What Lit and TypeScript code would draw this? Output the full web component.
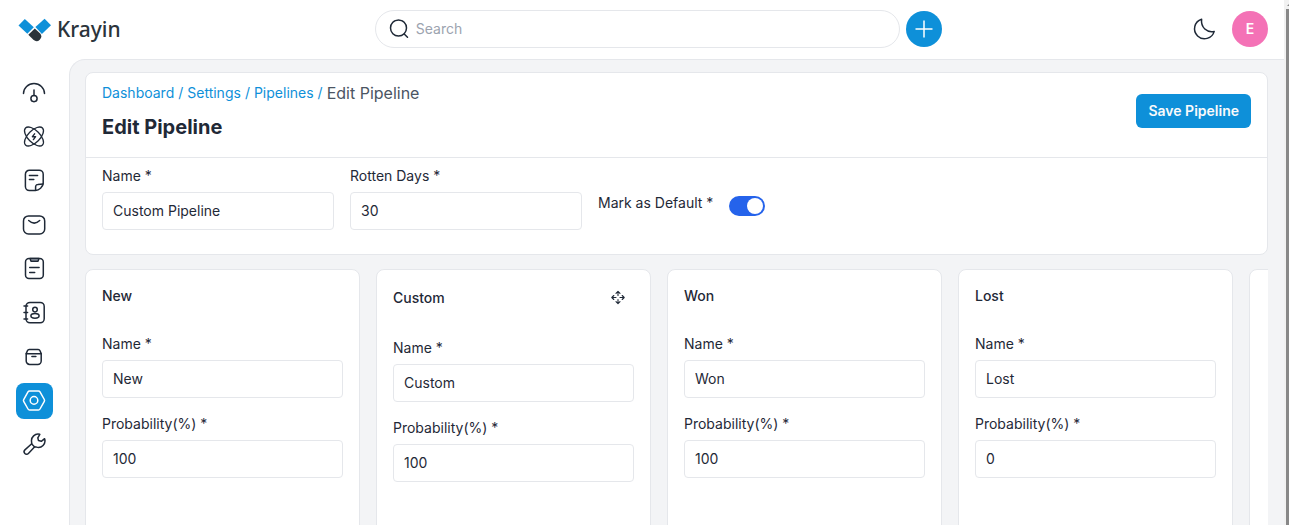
import { LitElement, html, css, svg } from "lit";
import { customElement, property, state } from "lit/decorators.js";
import { classMap } from "lit/directives/class-map.js";

interface Stage {
  title: string;
  name: string;
  probability: string;
  movable?: boolean;
}

interface NavEntry {
  label: string;
  icon: unknown;
}

const NAV: NavEntry[] = [
  {
    label: "Dashboard",
    icon: svg`<path d="M1.5 12.6a10.5 10 0 0 1 21 0"/><circle cx="12" cy="17.6" r="3.1"/><path d="M12 9v5.4"/>`,
  },
  {
    label: "Leads",
    icon: svg`<g stroke-width="1.3"><ellipse cx="12" cy="11.5" rx="12" ry="6" transform="rotate(45 12 11.5)"/><ellipse cx="12" cy="11.5" rx="12" ry="6" transform="rotate(-45 12 11.5)"/></g><path d="M12.600 8.800l-2.200 2.900h3.200l-2.200 2.900" stroke-width="1.400"/>`,
  },
  {
    label: "Quotes",
    icon: svg`<path d="M13.4 21.6H7.4a4 4 0 0 1-4-4V5.2a4 4 0 0 1 4-4h9.8a4 4 0 0 1 4 4v9.2c-.2 3.600-4.200 6.800-7.800 7.200z"/><path d="M13.600 21.300v-3.500a2.200 2.200 0 0 1 2.200-2.200l5.200-.6"/><path d="M7.400 6.600h8.200M7.400 10.400h4.400"/>`,
  },
  {
    label: "Mail",
    icon: svg`<rect x="1.500" y="2.900" width="21.200" height="18" rx="5"/><path d="M6.700 7.500c3.600 3.400 7.400 3.400 11 0"/>`,
  },
  {
    label: "Activities",
    icon: svg`<rect x="3.500" y="1.400" width="17.800" height="20.200" rx="3.500"/><path d="M8 1.600l1 2.600h7l1-2.600z" fill="#9ca3af"/><path d="M7.700 10.400h9.400M7.700 15.400h5"/>`,
  },
  {
    label: "Contacts",
    icon: svg`<rect x="4" y="1.400" width="18.200" height="20.400" rx="4"/><path d="M2 5h3.600M2 11.500h3.600M2 18h3.600"/><circle cx="13" cy="8.600" r="2.300"/><ellipse cx="13" cy="14.800" rx="4.100" ry="2.400"/>`,
  },
  {
    label: "Products",
    icon: svg`<path d="M4.200 8.600l1.200-2.900a2 2 0 0 1 1.800-1.200h9a2 2 0 0 1 1.800 1.200l1.200 2.900v7.400a3.400 3.400 0 0 1-3.400 3.400H7.600a3.400 3.400 0 0 1-3.400-3.400z"/><path d="M4.200 8.700h15M9.900 11.600h4"/>`,
  },
  {
    label: "Settings",
    icon: svg`<path d="M7.600 2h8.800a1.800 1.800 0 0 1 1.600.9l4.300 7.600a1.800 1.800 0 0 1 0 1.800L18 20a1.800 1.800 0 0 1-1.600.9H7.600A1.800 1.800 0 0 1 6 20l-4.300-7.700a1.800 1.800 0 0 1 0-1.800L6 2.900A1.800 1.800 0 0 1 7.600 2z"/><circle cx="12" cy="11.400" r="3.800"/>`,
  },
  {
    label: "Configuration",
    icon: svg`<path d="M17.800 1.300a6.600 6.600 0 0 0-8.200 7.600L9.700 11l3 3 1.700.1a6.600 6.600 0 0 0 8.200-8.400l-3.300 2.600-2.800-.7-.7-2.800z"/><path d="M9.700 10.800l-6.800 6.100a2.500 2.500 0 1 0 3.500 3.600l6.300-6.700"/>`,
  },
];

/* Text box with its caption above it. */
@customElement("form-field")
class FormField extends LitElement {
  @property() label = "";
  @property() value = "";

  static styles = css`
    :host {
      display: block;
    }
    .caption {
      display: block;
      margin-bottom: 6px;
      font-size: 14px;
      line-height: 20px;
      color: #1f2937;
    }
    .box {
      display: block;
      box-sizing: border-box;
      width: 100%;
      height: 38px;
      padding: 0 10px 2px;
      border: 1px solid #e5e7eb;
      border-radius: 4px;
      background: #fff;
      font: inherit;
      font-size: 14px;
      color: #1f2937;
      outline: none;
    }
    .box:focus {
      border-color: #9ca3af;
    }
  `;

  render() {
    return html`
      <label class="caption" for="box">${this.label} *</label>
      <input class="box" id="box" type="text" .value=${this.value} />
    `;
  }
}

@customElement("app-root")
class AppRoot extends LitElement {
  @state() private active = "Settings";

  private stages: Stage[] = [
    { title: "New", name: "New", probability: "100" },
    { title: "Custom", name: "Custom", probability: "100", movable: true },
    { title: "Won", name: "Won", probability: "100" },
    { title: "Lost", name: "Lost", probability: "0" },
  ];

  static styles = css`
    :host {
      display: flex;
      height: 100vh;
      overflow: hidden;
      background: #fff;
      font-family: Inter, "Liberation Sans", sans-serif;
      font-size: 14px;
      line-height: 20px;
      color: #1f2937;
    }
    * {
      box-sizing: border-box;
    }
    svg {
      display: block;
      flex: none;
    }
    button {
      font: inherit;
      cursor: pointer;
    }
    .line {
      fill: none;
      stroke: currentColor;
      stroke-width: 1.5;
      stroke-linecap: round;
      stroke-linejoin: round;
    }
    .page {
      flex: 1;
      min-width: 0;
      display: flex;
      flex-direction: column;
    }
    .top {
      flex: none;
      display: flex;
      align-items: center;
      justify-content: space-between;
      height: 59px;
      padding: 0 16px 1px;
    }
    .brand {
      display: flex;
      align-items: center;
      gap: 5px;
      padding-right: 4px;
      color: #2b343b;
      font-family: "Noto Sans", sans-serif;
      font-size: 21px;
      font-weight: 500;
      line-height: 28px;
      text-decoration: none;
    }
    .middle {
      flex: 0 1 567px;
      display: flex;
      align-items: center;
      gap: 6px;
    }
    .search {
      flex: 1;
      min-width: 0;
      display: flex;
      align-items: center;
      gap: 5px;
      height: 38px;
      padding: 0 12px;
      border: 1px solid #e5e7eb;
      border-radius: 19px;
    }
    .query {
      flex: 1;
      min-width: 0;
      padding: 0;
      border: 0;
      outline: none;
      background: none;
      font: inherit;
      color: inherit;
    }
    .query::placeholder {
      color: #9ca3af;
      opacity: 1;
    }
    .round {
      display: flex;
      align-items: center;
      justify-content: center;
      width: 36px;
      height: 36px;
      padding: 0;
      border: 0;
      border-radius: 50%;
      color: #fff;
    }
    .add {
      background: #0e90d9;
    }
    .user {
      background: #f472b6;
      font-weight: 600;
    }
    .right {
      display: flex;
      align-items: center;
      gap: 16px;
    }
    .plain {
      padding: 0;
      border: 0;
      background: none;
      color: inherit;
    }
    .body {
      flex: 1;
      min-height: 0;
      display: flex;
    }
    .nav {
      flex: none;
      display: flex;
      flex-direction: column;
      gap: 8px;
      width: 69px;
      padding: 16px;
    }
    .item {
      display: flex;
      align-items: center;
      height: 36px;
      padding-left: 6px;
      border-radius: 8px;
      color: #1f2937;
    }
    .item.on {
      background: #0e90d9;
      color: #fff;
    }
    .main {
      flex: 1;
      min-width: 0;
      display: flex;
      flex-direction: column;
      gap: 14px;
      padding: 12px 16px 0 15px;
      border: 1px solid #e5e7eb;
      border-width: 1px 0 0 1px;
      border-top-left-radius: 16px;
      background: #f3f4f6;
    }
    .card {
      border: 1px solid #e5e7eb;
      border-radius: 8px;
      background: #fff;
    }
    .head {
      display: flex;
      align-items: center;
      justify-content: space-between;
      padding: 8px 16px 16px;
      border-bottom: 1px solid #e5e7eb;
    }
    .crumbs {
      display: flex;
      gap: 4px;
      margin-bottom: 8px;
      line-height: 24px;
      color: #0e90d9;
    }
    .crumbs a {
      color: inherit;
      text-decoration: none;
    }
    .here {
      font-size: 16px;
      color: #4b5563;
    }
    .title {
      margin: 0;
      font-size: 20px;
      font-weight: 700;
      line-height: 28px;
    }
    .save {
      height: 34px;
      padding: 0 12px;
      border: 0;
      border-radius: 6px;
      background: #0e90d9;
      color: #f9fafb;
      font-weight: 600;
    }
    .basics {
      display: flex;
      gap: 16px;
      padding: 8px 16px 24px;
    }
    .short {
      flex: 0 1 232px;
    }
    .default {
      display: flex;
      gap: 16px;
      align-self: center;
      align-items: flex-end;
      padding-top: 12px;
    }
    .default label {
      padding-bottom: 3px;
    }
    .switch {
      appearance: none;
      display: flex;
      flex: none;
      width: 36px;
      height: 20px;
      margin: 0;
      padding: 2px;
      border-radius: 10px;
      background: #e5e7eb;
      cursor: pointer;
    }
    .switch::before {
      content: "";
      width: 16px;
      height: 16px;
      border-radius: 50%;
      background: #fff;
    }
    .switch:checked {
      justify-content: flex-end;
      background: #2563eb;
    }
    .stages {
      flex: 1;
      min-height: 0;
      display: flex;
      gap: 16px;
      overflow: hidden;
    }
    .stage {
      flex: none;
      display: flex;
      flex-direction: column;
      gap: 16px;
      width: 275px;
      height: 480px;
      padding: 16px;
    }
    .bar {
      display: flex;
      align-items: center;
      justify-content: space-between;
      padding-right: 4px;
      margin-bottom: 12px;
    }
    .name {
      margin: 0;
      font-size: 14px;
      font-weight: 500;
      line-height: 20px;
    }
    .track {
      flex: none;
      display: flex;
      flex-direction: column;
      align-items: flex-end;
      width: 5px;
      background: #f1f1f1;
    }
    .arrow {
      width: 3px;
      height: 9px;
      fill: #888;
    }
    .thumb {
      flex: 1;
      width: 3px;
      background: #888;
    }
  `;

  private open(event: Event, label: string) {
    event.preventDefault();
    this.active = label;
  }

  private renderTop() {
    return html`
      <header class="top">
        <a class="brand" href="#">
          <svg width="36" height="26" viewBox="0 0 36 26">
            <path d="M2.500 9.500l6.300-6.600 9 8.300-6.500 6.600z" fill="#0e90d9" />
            <path d="M35 9.200l-6.400-6.400-9.200 8.300 6.500 6.800z" fill="#0e90d9" />
            <path d="M12.300 18.800l6.500-6.400 5.100 4.900a4.600 4.600 0 0 1-6.500 6.500z" fill="#2b343b" />
          </svg>
          Krayin
        </a>
        <div class="middle">
          <div class="search">
            <svg class="line" width="23" height="24" viewBox="0 0 23 24">
              <circle cx="10.500" cy="11" r="8" />
              <path d="M16.200 17l3.300 3.200" />
            </svg>
            <input class="query" type="search" placeholder="Search" aria-label="Search" />
          </div>
          <button class="round add" aria-label="Add">
            <svg width="20" height="20" viewBox="0 0 20 20" fill="none" stroke="currentColor" stroke-width="1.500">
              <path d="M10 1.500v17M1.500 10h17" />
            </svg>
          </button>
        </div>
        <div class="right">
          <button class="plain" aria-label="Dark mode">
            <svg class="line" width="24" height="24" viewBox="0 0 24 24">
              <path d="M9.600 2.200a10 10 0 1 0 12.600 12.200C15 16 8.600 10.600 9.600 2.200z" />
            </svg>
          </button>
          <button class="round user">E</button>
        </div>
      </header>
    `;
  }

  private renderStage(stage: Stage) {
    return html`
      <section class="card stage">
        <div class="bar">
          <h2 class="name">${stage.title}</h2>
          ${stage.movable
            ? html`<button class="plain" aria-label="Move stage">
                <svg class="line" width="24" height="24" viewBox="0 0 24 24">
                  <g stroke-width="1.100">
                    <path
                      d="M12 9.500V5.500M10 7.300l2-2 2 2M12 13.500v4M10 15.700l2 2 2-2M10 11.500H6M7.800 9.500l-2 2 2 2M14 11.500h4M16.200 9.500l2 2-2 2"
                    />
                  </g>
                </svg>
              </button>`
            : null}
        </div>
        <form-field label="Name" .value=${stage.name}></form-field>
        <form-field label="Probability(%)" .value=${stage.probability}></form-field>
      </section>
    `;
  }

  render() {
    return html`
      <div class="page">
        ${this.renderTop()}
        <div class="body">
          <nav class="nav">
            ${NAV.map(
              (entry) => html`<a
                class=${classMap({ item: true, on: entry.label === this.active })}
                href="#"
                aria-label=${entry.label}
                @click=${(event: Event) => this.open(event, entry.label)}
                ><svg class="line" width="24" height="24" viewBox="0 0 24 24">${entry.icon}</svg></a
              >`,
            )}
          </nav>
          <main class="main">
            <section class="card">
              <div class="head">
                <div>
                  <div class="crumbs">
                    <a href="#">Dashboard</a><span>/</span><a href="#">Settings</a><span>/</span
                    ><a href="#">Pipelines</a><span>/</span><span class="here">Edit Pipeline</span>
                  </div>
                  <h1 class="title">Edit Pipeline</h1>
                </div>
                <button class="save">Save Pipeline</button>
              </div>
              <div class="basics">
                <form-field class="short" label="Name" .value=${"Custom Pipeline"}></form-field>
                <form-field class="short" label="Rotten Days" .value=${"30"}></form-field>
                <div class="default">
                  <label for="default">Mark as Default *</label>
                  <input class="switch" id="default" type="checkbox" role="switch" checked />
                </div>
              </div>
            </section>
            <div class="stages">
              ${this.stages.map((stage) => this.renderStage(stage))}
              <section class="card stage"></section>
            </div>
          </main>
        </div>
      </div>
      <div class="track">
        <svg class="arrow" viewBox="0 0 3 9"><path d="M1 6l2-2v2z" /></svg>
        <div class="thumb"></div>
      </div>
    `;
  }
}
